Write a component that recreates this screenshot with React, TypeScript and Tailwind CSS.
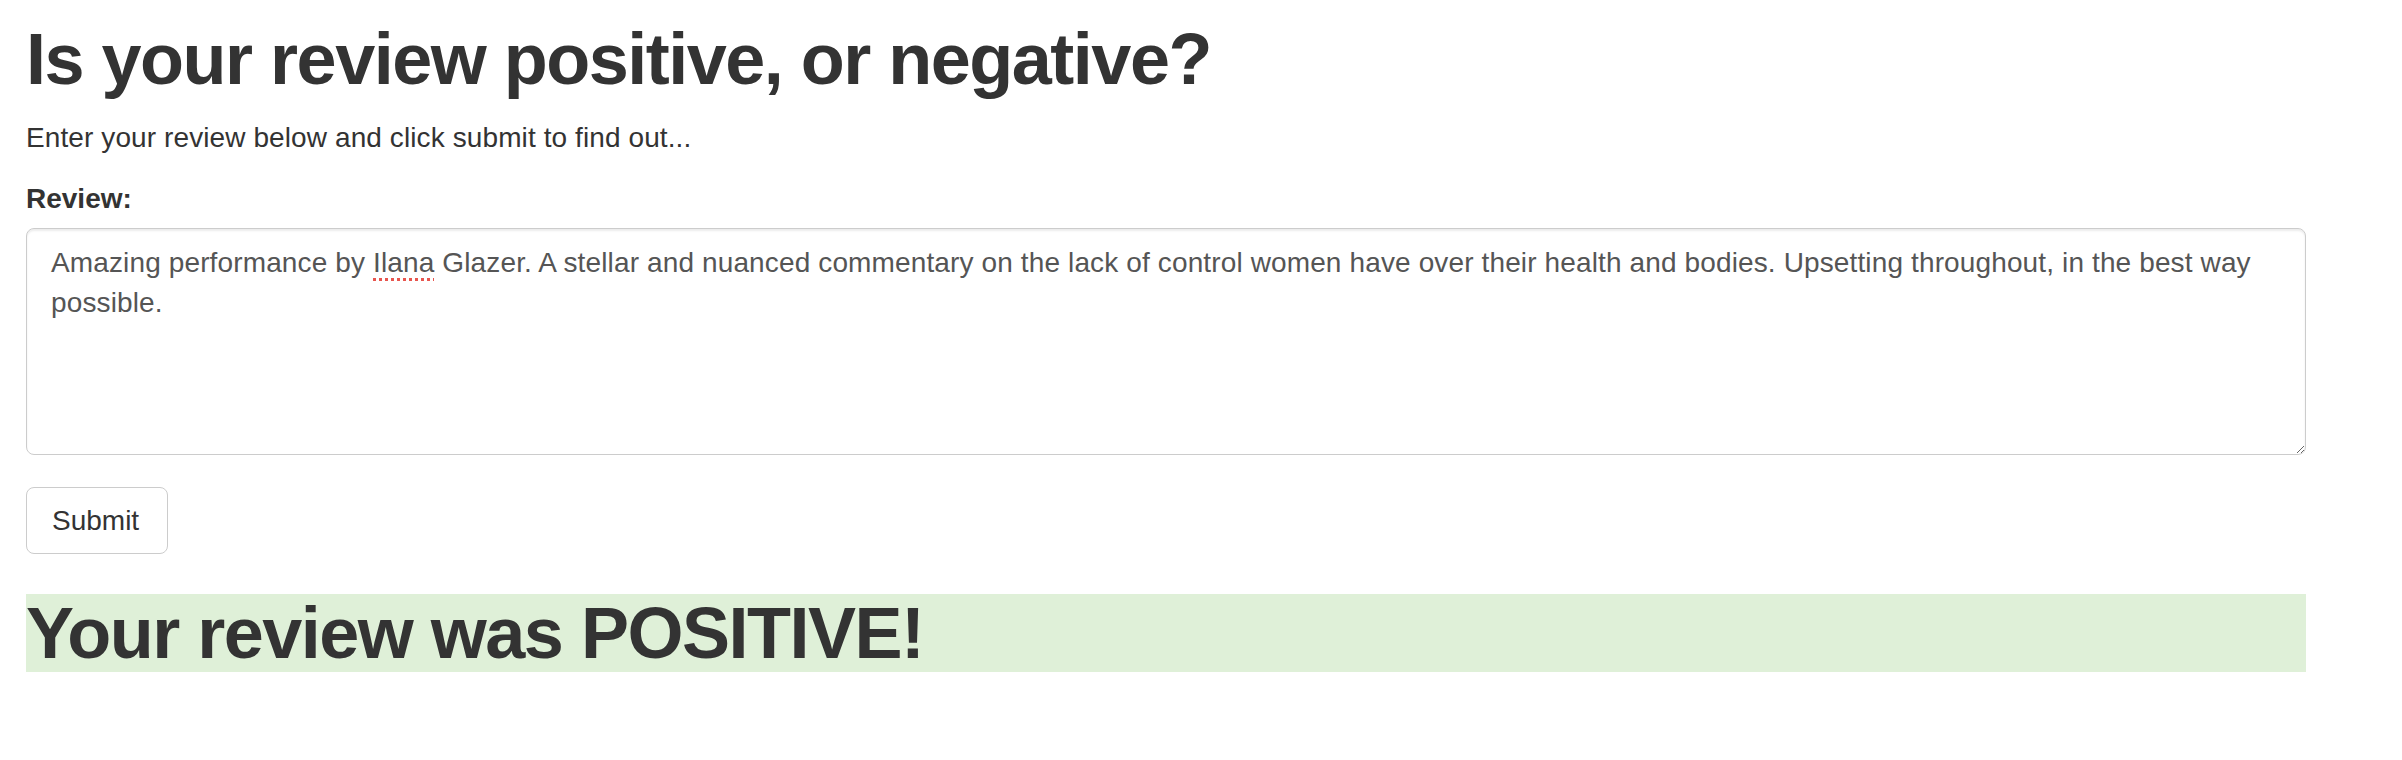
import React from "react";

export default function App() {
  const font = { fontFamily: '"Liberation Sans", Arial, Helvetica, sans-serif' };
  return (
    <div className="bg-white min-h-[760px] text-[#333]" style={font}>
      <div className="w-[2332px] px-[26px] flex flex-col">
        <h1 className="mt-[20px] text-[72px] leading-[79px] font-bold tracking-[-1.5px] text-[#333]">
          Is your review positive, or negative?
        </h1>
        <p className="mt-[19px] text-[28px] leading-[40px] tracking-[0.1px]">
          Enter your review below and click submit to find out...
        </p>
        <form className="flex flex-col" onSubmit={(e) => e.preventDefault()}>
          <label className="mt-[21px] text-[28px] leading-[40px] font-bold">Review:</label>
          <div className="mt-[9px] h-[227px] w-full resize overflow-auto rounded-[8px] border border-[#ccc] shadow-[inset_0_2px_2px_rgba(0,0,0,0.075)] px-[24px] pt-[14px] pb-[10px] text-[28px] leading-[40px] tracking-[0.13px] text-[#555]">
            Amazing performance by{" "}
            <span className="underline decoration-dotted decoration-[#e8554e] decoration-[3px] underline-offset-[6px]">Ilana</span>{" "}
            Glazer. A stellar and nuanced commentary on the lack of control women have over their health and bodies. Upsetting throughout, in the best way possible.
          </div>
          <div className="mt-[32px]">
            <button
              type="submit"
              className="h-[67px] pl-[25px] pr-[28px] rounded-[8px] border border-[#ccc] bg-white text-[28px] leading-[40px] text-[#333]"
            >
              Submit
            </button>
          </div>
        </form>
        <h1 className="mt-[40px] bg-[#dff0d8] text-[72px] leading-[78px] font-bold tracking-[-1.5px] text-[#333]">
          Your review was POSITIVE!
        </h1>
      </div>
    </div>
  );
}
